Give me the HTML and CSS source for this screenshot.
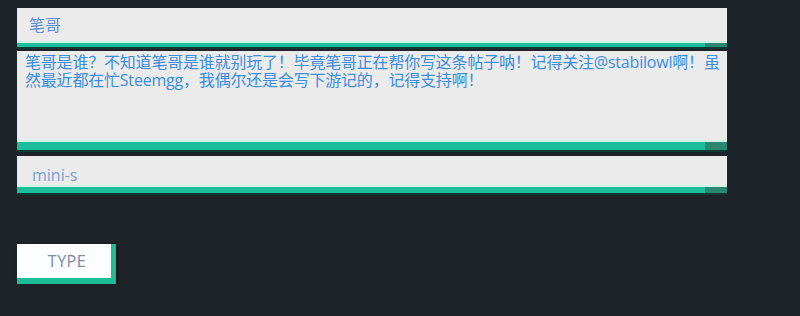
FILE: index.html
```html
<!DOCTYPE html>
<html lang="zh">
<head>
<meta charset="utf-8">
<title>Form</title>
<link rel="stylesheet" href="styles.css">
</head>
<body>
<form class="page">
  <div class="field field-title">
    <input class="input input-title" type="text" placeholder="笔哥">
  </div>
  <div class="field field-body">
    <textarea class="input textarea" wrap="off">笔哥是谁？不知道笔哥是谁就别玩了！毕竟笔哥正在帮你写这条帖子呐！记得关注@stabilowl啊！虽
然最近都在忙Steemgg，我偶尔还是会写下游记的，记得支持啊！</textarea>
  </div>
  <div class="field field-tag">
    <input class="input input-tag" type="text" value="mini-s">
  </div>
  <button class="type-btn" type="button">TYPE</button>
</form>
</body>
</html>
```
FILE: styles.css
```css
html, body {
  margin: 0;
  background: #1e2229;
}

.page {
  display: flex;
  flex-direction: column;
  align-items: flex-start;
  padding: 8px 0 0 17px;
  width: 710px;
}

.field {
  align-self: stretch;
  background: linear-gradient(to right, #1dbd99 calc(100% - 22px), #2c8771 calc(100% - 22px));
  box-shadow: 0 2px 1px #0f3a33;
}

.input {
  display: block;
  width: 100%;
  box-sizing: border-box;
  margin: 0;
  border: 0;
  border-bottom: 2px solid #cdf3e6;
  border-right: 1px solid #f4f6f6;
  background: #ebebeb;
  font-family: "Open Sans", "Noto Sans CJK SC", sans-serif;
  font-size: 16px;
  outline: none;
}

.field-title {
  padding-bottom: 4px;
  margin-bottom: 4px;
}

.input-title {
  height: 35px;
  padding: 0 12px;
  color: #5d8fcf;
}

.input-title::placeholder {
  color: #5d8fcf;
  opacity: 1;
}

.field-body {
  padding-bottom: 8px;
  margin-bottom: 6px;
}

.textarea {
  height: 91px;
  padding: 2px 8px 0 8px;
  line-height: 18px;
  letter-spacing: -0.2px;
  color: #3b8de0;
  resize: none;
  overflow: hidden;
  white-space: pre;
}

.field-tag {
  padding-bottom: 6px;
}

.input-tag {
  height: 31px;
  padding: 9px 15px 0 15px;
  color: #7ba0d4;
}

.type-btn {
  margin-top: 51px;
  width: 99px;
  height: 40px;
  box-sizing: border-box;
  padding: 0 0 0 6px;
  border: 0;
  border-right: 5px solid #1dbd99;
  border-bottom: 6px solid #1dbd99;
  background: #fbfdff;
  box-shadow: 1px 1px 2px #0b0d10;
  color: #7d8aa6;
  font-family: "Open Sans", sans-serif;
  font-size: 16px;
  letter-spacing: 0.5px;
  cursor: pointer;
}
```
